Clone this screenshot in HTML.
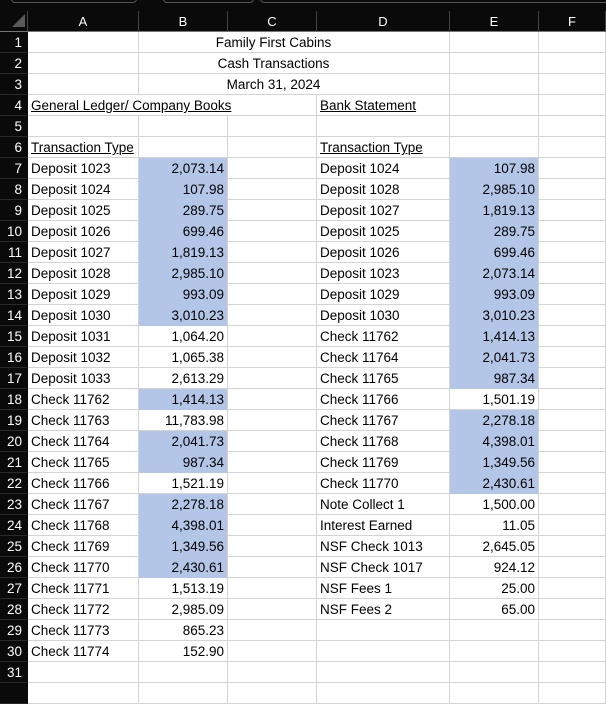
<!DOCTYPE html>
<html><head><meta charset="utf-8"><style>
body{margin:0;width:606px;height:685px;overflow:hidden;background:#fff;position:relative;font-family:"Liberation Sans",sans-serif;font-size:13.5px;color:#000}
.top{position:absolute;left:0;top:0;width:606px;height:11px;background:#0a0a0a}
.tab{position:absolute;top:-6px;height:7px;border:1px solid #555;border-radius:4px}
.g{position:absolute;left:0;top:11px;width:606px}
.row{display:flex;height:21px}
.row>div{flex:none;box-sizing:border-box;height:21px;padding:2px 3px 0 3px;border-right:1px solid #d4d4d4;border-bottom:1px solid #d4d4d4;white-space:nowrap;overflow:hidden;line-height:18px}
.row>div:nth-child(1){width:28px}
.w1{width:111px}.w2{width:89px}.w3{width:89px}.w4{width:133px}.w5{width:89px}.w6{width:67px}
.wA3{width:289px}.wB3{width:311px}
.h>div{background:#0a0a0a;color:#fff;text-align:center;border-right:1px solid #444!important;border-bottom:1px solid #777!important;font-size:13px}
.row>div.r{background:#0a0a0a;color:#fff;text-align:right;padding-right:5px;border-right:1px solid #0a0a0a;border-bottom:1px solid #2a2a2a}
.n{text-align:right}
.row>div.b{background:#b4c6e7;border-bottom-color:#b4c6e7}
u{text-decoration:underline}
.t{text-align:center;padding-right:44px!important}
</style></head><body>
<div class="top"><div class="tab" style="left:11px;width:124px"></div><div class="tab" style="left:163px;width:89px"></div><div class="tab" style="left:260px;width:360px"></div></div>
<div class="g">
<div class="row h"><div></div><div class="w1">A</div><div class="w2">B</div><div class="w3">C</div><div class="w4">D</div><div class="w5">E</div><div class="w6">F</div></div>
<div class="row"><div class="r">1</div><div class="w1"></div><div class="wB3 t">Family First Cabins</div><div class="w5"></div><div class="w6"></div></div>
<div class="row"><div class="r">2</div><div class="w1"></div><div class="wB3 t">Cash Transactions</div><div class="w5"></div><div class="w6"></div></div>
<div class="row"><div class="r">3</div><div class="w1"></div><div class="wB3 t">March 31, 2024</div><div class="w5"></div><div class="w6"></div></div>
<div class="row"><div class="r">4</div><div class="wA3"><u>General Ledger/ Company Books</u></div><div class="w4"><u>Bank Statement</u></div><div class="w5"></div><div class="w6"></div></div>
<div class="row"><div class="r">5</div><div class="w1"></div><div class="w2"></div><div class="w3"></div><div class="w4"></div><div class="w5"></div><div class="w6"></div></div>
<div class="row"><div class="r">6</div><div class="w1"><u>Transaction Type</u></div><div class="w2"></div><div class="w3"></div><div class="w4"><u>Transaction Type</u></div><div class="w5"></div><div class="w6"></div></div>
<div class="row"><div class="r">7</div><div class="w1">Deposit 1023</div><div class="w2 n b">2,073.14</div><div class="w3"></div><div class="w4">Deposit 1024</div><div class="w5 n b">107.98</div><div class="w6"></div></div>
<div class="row"><div class="r">8</div><div class="w1">Deposit 1024</div><div class="w2 n b">107.98</div><div class="w3"></div><div class="w4">Deposit 1028</div><div class="w5 n b">2,985.10</div><div class="w6"></div></div>
<div class="row"><div class="r">9</div><div class="w1">Deposit 1025</div><div class="w2 n b">289.75</div><div class="w3"></div><div class="w4">Deposit 1027</div><div class="w5 n b">1,819.13</div><div class="w6"></div></div>
<div class="row"><div class="r">10</div><div class="w1">Deposit 1026</div><div class="w2 n b">699.46</div><div class="w3"></div><div class="w4">Deposit 1025</div><div class="w5 n b">289.75</div><div class="w6"></div></div>
<div class="row"><div class="r">11</div><div class="w1">Deposit 1027</div><div class="w2 n b">1,819.13</div><div class="w3"></div><div class="w4">Deposit 1026</div><div class="w5 n b">699.46</div><div class="w6"></div></div>
<div class="row"><div class="r">12</div><div class="w1">Deposit 1028</div><div class="w2 n b">2,985.10</div><div class="w3"></div><div class="w4">Deposit 1023</div><div class="w5 n b">2,073.14</div><div class="w6"></div></div>
<div class="row"><div class="r">13</div><div class="w1">Deposit 1029</div><div class="w2 n b">993.09</div><div class="w3"></div><div class="w4">Deposit 1029</div><div class="w5 n b">993.09</div><div class="w6"></div></div>
<div class="row"><div class="r">14</div><div class="w1">Deposit 1030</div><div class="w2 n b">3,010.23</div><div class="w3"></div><div class="w4">Deposit 1030</div><div class="w5 n b">3,010.23</div><div class="w6"></div></div>
<div class="row"><div class="r">15</div><div class="w1">Deposit 1031</div><div class="w2 n">1,064.20</div><div class="w3"></div><div class="w4">Check 11762</div><div class="w5 n b">1,414.13</div><div class="w6"></div></div>
<div class="row"><div class="r">16</div><div class="w1">Deposit 1032</div><div class="w2 n">1,065.38</div><div class="w3"></div><div class="w4">Check 11764</div><div class="w5 n b">2,041.73</div><div class="w6"></div></div>
<div class="row"><div class="r">17</div><div class="w1">Deposit 1033</div><div class="w2 n">2,613.29</div><div class="w3"></div><div class="w4">Check 11765</div><div class="w5 n b">987.34</div><div class="w6"></div></div>
<div class="row"><div class="r">18</div><div class="w1">Check 11762</div><div class="w2 n b">1,414.13</div><div class="w3"></div><div class="w4">Check 11766</div><div class="w5 n">1,501.19</div><div class="w6"></div></div>
<div class="row"><div class="r">19</div><div class="w1">Check 11763</div><div class="w2 n">11,783.98</div><div class="w3"></div><div class="w4">Check 11767</div><div class="w5 n b">2,278.18</div><div class="w6"></div></div>
<div class="row"><div class="r">20</div><div class="w1">Check 11764</div><div class="w2 n b">2,041.73</div><div class="w3"></div><div class="w4">Check 11768</div><div class="w5 n b">4,398.01</div><div class="w6"></div></div>
<div class="row"><div class="r">21</div><div class="w1">Check 11765</div><div class="w2 n b">987.34</div><div class="w3"></div><div class="w4">Check 11769</div><div class="w5 n b">1,349.56</div><div class="w6"></div></div>
<div class="row"><div class="r">22</div><div class="w1">Check 11766</div><div class="w2 n">1,521.19</div><div class="w3"></div><div class="w4">Check 11770</div><div class="w5 n b">2,430.61</div><div class="w6"></div></div>
<div class="row"><div class="r">23</div><div class="w1">Check 11767</div><div class="w2 n b">2,278.18</div><div class="w3"></div><div class="w4">Note Collect 1</div><div class="w5 n">1,500.00</div><div class="w6"></div></div>
<div class="row"><div class="r">24</div><div class="w1">Check 11768</div><div class="w2 n b">4,398.01</div><div class="w3"></div><div class="w4">Interest Earned</div><div class="w5 n">11.05</div><div class="w6"></div></div>
<div class="row"><div class="r">25</div><div class="w1">Check 11769</div><div class="w2 n b">1,349.56</div><div class="w3"></div><div class="w4">NSF Check 1013</div><div class="w5 n">2,645.05</div><div class="w6"></div></div>
<div class="row"><div class="r">26</div><div class="w1">Check 11770</div><div class="w2 n b">2,430.61</div><div class="w3"></div><div class="w4">NSF Check 1017</div><div class="w5 n">924.12</div><div class="w6"></div></div>
<div class="row"><div class="r">27</div><div class="w1">Check 11771</div><div class="w2 n">1,513.19</div><div class="w3"></div><div class="w4">NSF Fees 1</div><div class="w5 n">25.00</div><div class="w6"></div></div>
<div class="row"><div class="r">28</div><div class="w1">Check 11772</div><div class="w2 n">2,985.09</div><div class="w3"></div><div class="w4">NSF Fees 2</div><div class="w5 n">65.00</div><div class="w6"></div></div>
<div class="row"><div class="r">29</div><div class="w1">Check 11773</div><div class="w2 n">865.23</div><div class="w3"></div><div class="w4"></div><div class="w5"></div><div class="w6"></div></div>
<div class="row"><div class="r">30</div><div class="w1">Check 11774</div><div class="w2 n">152.90</div><div class="w3"></div><div class="w4"></div><div class="w5"></div><div class="w6"></div></div>
<div class="row"><div class="r">31</div><div class="w1"></div><div class="w2"></div><div class="w3"></div><div class="w4"></div><div class="w5"></div><div class="w6"></div></div>
<div class="row"><div class="r"></div><div class="w1"></div><div class="w2"></div><div class="w3"></div><div class="w4"></div><div class="w5"></div><div class="w6"></div></div>
</div>
<svg style="position:absolute;left:12px;top:14px;z-index:5" width="14" height="14"><polygon points="13,0 13,13 0,13" fill="#5a5a5a"/></svg>
</body></html>
